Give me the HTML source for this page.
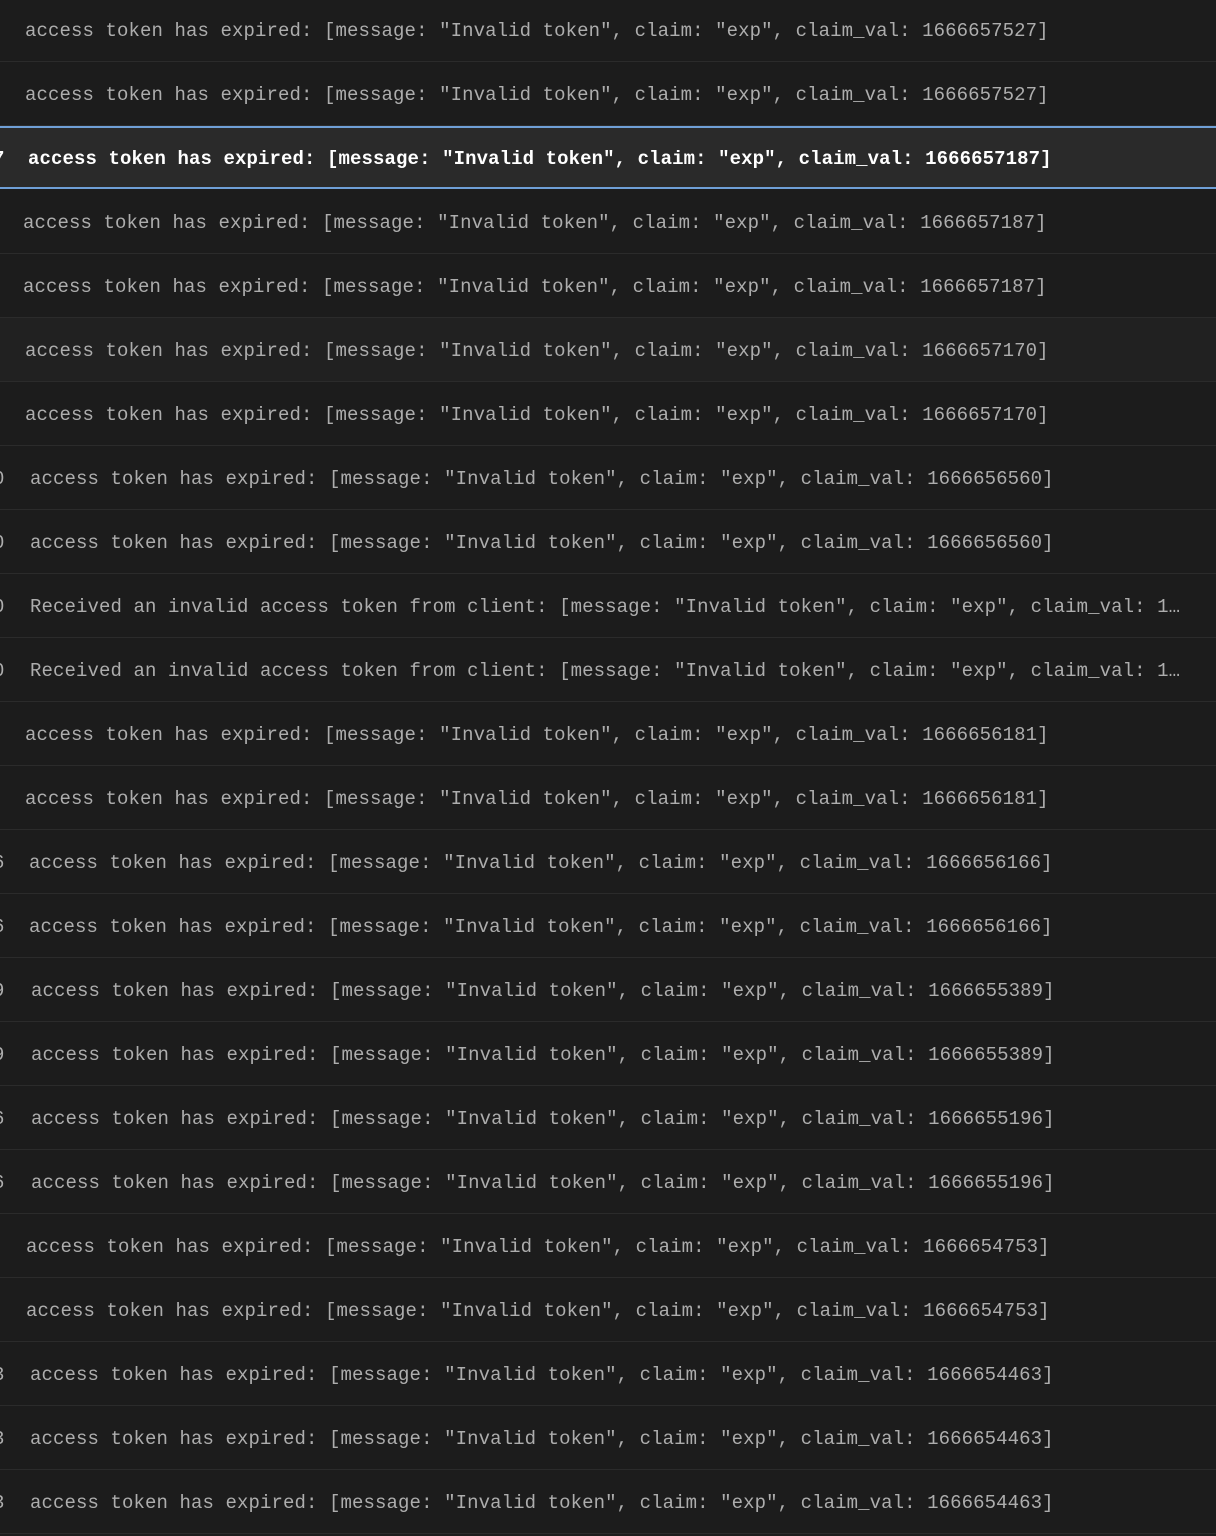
<!DOCTYPE html>
<html><head><meta charset="utf-8"><style>
html,body{margin:0;padding:0;background:#1c1c1c;width:1216px;height:1502px;overflow:hidden}
.r{position:absolute;left:0;width:1216px;height:63px;border-bottom:1px solid #2b2b2b;box-sizing:content-box}
.t{position:absolute;top:0;height:63px;line-height:66px;font-family:"Liberation Mono","DejaVu Sans Mono",monospace;font-size:19px;letter-spacing:0.1px;color:#adadad;white-space:pre}
.p{position:absolute;top:0;height:63px;line-height:66px;font-family:"Liberation Mono",monospace;font-size:19px;color:#adadad;white-space:pre}
.sel{background:#2a2a2a;border-top:2px solid #6f9fd6;border-bottom:2px solid #6f9fd6;border-right:2px solid #6f9fd6;height:59px}
.sel .t,.sel .p{color:#fff;font-weight:bold;line-height:62px;height:59px}
.hov{background:#212121}
</style></head><body>
<div class="r" style="top:-2px"><span class="t" style="left:25px">access token has expired: [message: "Invalid token", claim: "exp", claim_val: 1666657527]</span></div>
<div class="r" style="top:62px"><span class="t" style="left:25px">access token has expired: [message: "Invalid token", claim: "exp", claim_val: 1666657527]</span></div>
<div class="r sel" style="top:126px"><span class="p" style="left:-7px">7</span><span class="t" style="left:28px">access token has expired: [message: "Invalid token", claim: "exp", claim_val: 1666657187]</span></div>
<div class="r" style="top:190px"><span class="t" style="left:23px">access token has expired: [message: "Invalid token", claim: "exp", claim_val: 1666657187]</span></div>
<div class="r" style="top:254px"><span class="t" style="left:23px">access token has expired: [message: "Invalid token", claim: "exp", claim_val: 1666657187]</span></div>
<div class="r hov" style="top:318px"><span class="t" style="left:25px">access token has expired: [message: "Invalid token", claim: "exp", claim_val: 1666657170]</span></div>
<div class="r" style="top:382px"><span class="t" style="left:25px">access token has expired: [message: "Invalid token", claim: "exp", claim_val: 1666657170]</span></div>
<div class="r" style="top:446px"><span class="p" style="left:-7px">0</span><span class="t" style="left:30px">access token has expired: [message: "Invalid token", claim: "exp", claim_val: 1666656560]</span></div>
<div class="r" style="top:510px"><span class="p" style="left:-7px">0</span><span class="t" style="left:30px">access token has expired: [message: "Invalid token", claim: "exp", claim_val: 1666656560]</span></div>
<div class="r" style="top:574px"><span class="p" style="left:-7px">0</span><span class="t" style="left:30px">Received an invalid access token from client: [message: "Invalid token", claim: "exp", claim_val: 1…</span></div>
<div class="r" style="top:638px"><span class="p" style="left:-7px">0</span><span class="t" style="left:30px">Received an invalid access token from client: [message: "Invalid token", claim: "exp", claim_val: 1…</span></div>
<div class="r" style="top:702px"><span class="t" style="left:25px">access token has expired: [message: "Invalid token", claim: "exp", claim_val: 1666656181]</span></div>
<div class="r" style="top:766px"><span class="t" style="left:25px">access token has expired: [message: "Invalid token", claim: "exp", claim_val: 1666656181]</span></div>
<div class="r" style="top:830px"><span class="p" style="left:-7px">6</span><span class="t" style="left:29px">access token has expired: [message: "Invalid token", claim: "exp", claim_val: 1666656166]</span></div>
<div class="r" style="top:894px"><span class="p" style="left:-7px">6</span><span class="t" style="left:29px">access token has expired: [message: "Invalid token", claim: "exp", claim_val: 1666656166]</span></div>
<div class="r" style="top:958px"><span class="p" style="left:-7px">9</span><span class="t" style="left:31px">access token has expired: [message: "Invalid token", claim: "exp", claim_val: 1666655389]</span></div>
<div class="r" style="top:1022px"><span class="p" style="left:-7px">9</span><span class="t" style="left:31px">access token has expired: [message: "Invalid token", claim: "exp", claim_val: 1666655389]</span></div>
<div class="r" style="top:1086px"><span class="p" style="left:-7px">6</span><span class="t" style="left:31px">access token has expired: [message: "Invalid token", claim: "exp", claim_val: 1666655196]</span></div>
<div class="r" style="top:1150px"><span class="p" style="left:-7px">6</span><span class="t" style="left:31px">access token has expired: [message: "Invalid token", claim: "exp", claim_val: 1666655196]</span></div>
<div class="r" style="top:1214px"><span class="t" style="left:26px">access token has expired: [message: "Invalid token", claim: "exp", claim_val: 1666654753]</span></div>
<div class="r" style="top:1278px"><span class="t" style="left:26px">access token has expired: [message: "Invalid token", claim: "exp", claim_val: 1666654753]</span></div>
<div class="r" style="top:1342px"><span class="p" style="left:-7px">3</span><span class="t" style="left:30px">access token has expired: [message: "Invalid token", claim: "exp", claim_val: 1666654463]</span></div>
<div class="r" style="top:1406px"><span class="p" style="left:-7px">3</span><span class="t" style="left:30px">access token has expired: [message: "Invalid token", claim: "exp", claim_val: 1666654463]</span></div>
<div class="r" style="top:1470px"><span class="p" style="left:-7px">3</span><span class="t" style="left:30px">access token has expired: [message: "Invalid token", claim: "exp", claim_val: 1666654463]</span></div>
</body></html>
